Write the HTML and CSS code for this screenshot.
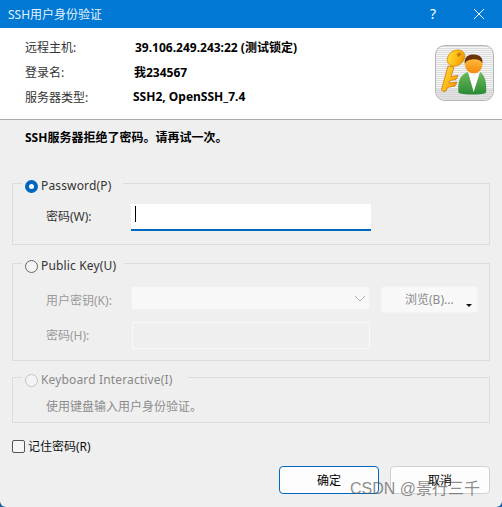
FILE: index.html
```html
<!DOCTYPE html>
<html lang="zh-CN">
<head>
    <meta charset="UTF-8">
    <title>SSH用户身份验证</title>
    <link rel="stylesheet" href="styles.css">
</head>
<body>
    <div class="window">
        <div class="titlebar">
            <span class="title">SSH用户身份验证</span>
            <span class="help">?</span>
            <svg class="close" width="12" height="12" viewBox="0 0 12 12"><path d="M1 1 L11 11 M11 1 L1 11" stroke="#fff" stroke-width="1" fill="none"/></svg>
        </div>

        <div class="header">
            <div class="info">
                <div class="info-row"><span class="info-label">远程主机:</span><b class="v1">39.106.249.243:22 (测试锁定)</b></div>
                <div class="info-row"><span class="info-label">登录名:</span><b class="v2">我234567</b></div>
                <div class="info-row"><span class="info-label">服务器类型:</span><b class="v3">SSH2, OpenSSH_7.4</b></div>
            </div>
            <svg class="logo" width="59" height="56" viewBox="0 0 59 56">
                <defs>
                    <pattern id="stripes" width="2" height="2" patternUnits="userSpaceOnUse">
                        <rect width="2" height="1" fill="#f6f6f6"/>
                        <rect y="1" width="2" height="1" fill="#dcdcdc"/>
                    </pattern>
                    <linearGradient id="gold" x1="0" y1="0" x2="1" y2="1">
                        <stop offset="0" stop-color="#ffe23a"/>
                        <stop offset="0.6" stop-color="#fdb40f"/>
                        <stop offset="1" stop-color="#e07f06"/>
                    </linearGradient>
                    <linearGradient id="skin" x1="0" y1="0" x2="0" y2="1">
                        <stop offset="0" stop-color="#ffc44a"/>
                        <stop offset="1" stop-color="#f58a0c"/>
                    </linearGradient>
                    <linearGradient id="shirt" x1="0" y1="0" x2="0" y2="1">
                        <stop offset="0" stop-color="#6cbb5c"/>
                        <stop offset="1" stop-color="#2c8a35"/>
                    </linearGradient>
                </defs>
                <rect x="0.5" y="0.5" width="58" height="55" rx="9" fill="url(#stripes)" stroke="#b4b4b4"/>
                <path d="M1 44 V46 a9 9 0 0 0 9 9 H49 a9 9 0 0 0 9 -9 V44 Z" fill="#d2d2d2" opacity="0.55"/>
                <path d="M13 21 L6.5 44.5 L8 46.5 L11 46 L12.5 42.5 L20 41 L22 37 L14 38 L15 35.5 L21 34.5 L23 30.5 L16 31.5 L19 22 Z" fill="url(#gold)" stroke="#c46f06" stroke-width="0.7"/>
                <ellipse cx="21" cy="13" rx="9.5" ry="7.5" transform="rotate(-35 21 13)" fill="url(#gold)" stroke="#d98a08" stroke-width="0.7"/>
                <ellipse cx="24" cy="9.5" rx="2.4" ry="1.7" transform="rotate(-35 24 9.5)" fill="#c97d08"/>
                <path d="M23.5 48 C22.5 38 24 30 33 27 L39 33 L45 27 C50 30 52 38 51 48 C44 50 31 50 23.5 48 Z" fill="url(#shirt)"/>
                <path d="M33 27 L38.7 47 L45 27 L39 30 Z" fill="#fff"/>
                <circle cx="38.7" cy="19.5" r="8.8" fill="url(#skin)"/>
                <path d="M29.7 19 C29 11 34 9.5 39 9.5 C45 9.5 48 13 47.5 18 C45 14.5 41 14 37 14.5 C33 15 31 16 29.7 19 Z" fill="#6e3209"/>
            </svg>
        </div>

        <div class="content">
            <p class="message">SSH服务器拒绝了密码。请再试一次。</p>

            <fieldset class="group group-password">
                <legend><span class="radio radio-on"></span>Password(P)</legend>
                <div class="field">
                    <label>密码(W):</label>
                    <div class="input input-active"><span class="caret"></span></div>
                </div>
            </fieldset>

            <fieldset class="group group-key">
                <legend><span class="radio"></span>Public Key(U)</legend>
                <div class="field off">
                    <label>用户密钥(K):</label>
                    <div class="combo">
                        <svg width="12" height="7" viewBox="0 0 12 7"><path d="M1 1 L6 6 L11 1" stroke="#b5b5b5" fill="none"/></svg>
                    </div>
                    <div class="browse">浏览(B)...<span class="browse-arrow"></span></div>
                </div>
                <div class="field off field-second">
                    <label>密码(H):</label>
                    <div class="input input-off"></div>
                </div>
            </fieldset>

            <fieldset class="group group-keyboard">
                <legend class="off"><span class="radio radio-off"></span>Keyboard Interactive(I)</legend>
                <p class="hint">使用键盘输入用户身份验证。</p>
            </fieldset>

            <label class="remember"><span class="checkbox"></span>记住密码(R)</label>

            <div class="actions">
                <button class="btn btn-default">确定</button>
                <button class="btn">取消</button>
            </div>
        </div>
        <div class="watermark">CSDN @景行三千</div>
    </div>
</body>
</html>
```

FILE: styles.css
```css
html, body {
    margin: 0;
    padding: 0;
    background: #0f5fae;
}
body {
    width: 502px;
    height: 507px;
    overflow: hidden;
    font-family: "Noto Sans", "Noto Sans CJK SC", sans-serif;
    font-size: 12px;
    color: #1a1a1a;
}
.window {
    position: relative;
    height: 507px;
    display: flex;
    flex-direction: column;
    background: #efefef;
    border-radius: 0 0 6px 6px;
    overflow: hidden;
}

/* title bar */
.titlebar {
    height: 27px;
    flex: none;
    display: flex;
    align-items: center;
    background: #0078d4;
    color: #fff;
    padding: 0 17px 1px 8px;
}
.title {
    flex: 1;
    color: #e6f2fb;
}
.help {
    font-size: 14px;
    margin-right: 37px;
}

/* top white part */
.header {
    height: 91px;
    flex: none;
    display: flex;
    background: #fff;
    border-bottom: 1px solid #aaa;
    padding-left: 25px;
    padding-right: 8px;
    box-sizing: content-box;
}
.info {
    flex: 1;
    padding-top: 6px;
}
.info-row {
    height: 25px;
    display: flex;
    align-items: center;
}
.info-label {
    width: 108px;
    color: #333;
}
.info-row b {
    color: #000;
    font-weight: 700;
}
.v1 { margin-left: 2px; }
.v2 { margin-left: 1px; }
.logo {
    margin-top: 17px;
}

/* lower gray part */
.content {
    flex: 1;
    padding: 0 12px;
}
.message {
    margin: 0;
    padding: 9px 0 0 13px;
    height: 24px;
    line-height: 18px;
    font-weight: 700;
    color: #000;
}
.group {
    width: 478px;
    box-sizing: border-box;
    margin: 0;
    padding: 0 0 0 33px;
    border: 1px solid #dcdcdc;
}
.group legend {
    margin-left: -24px;
    padding: 6px 12px 0 3px;
    height: 16px;
    line-height: 16px;
    display: flex;
    align-items: center;
    color: #333;
    box-sizing: content-box;
    letter-spacing: 0.15px;
}
.group-password {
    margin-top: 19px;
    height: 73px;
    padding-top: 10px;
}
.group-key {
    margin-top: 7px;
    height: 109px;
    padding-top: 12px;
}
.group-key legend {
    padding-right: 8px;
}
.group-keyboard {
    margin-top: 5px;
    height: 57px;
}
.group-keyboard legend {
    padding-right: 16px;
}
.radio {
    width: 13px;
    height: 13px;
    flex: none;
    box-sizing: border-box;
    border: 1px solid #666;
    border-radius: 50%;
    margin-right: 3px;
    background: #f4f4f4;
}
.radio-on {
    border: 4px solid #0067c0;
    background: #fff;
}
.radio-off {
    border-color: #c4c4c4;
}
.field {
    display: flex;
    align-items: flex-start;
}
.field label {
    width: 85px;
    height: 27px;
    line-height: 26px;
    flex: none;
    color: #333;
}
.field.off label {
    color: #9a9a9a;
    padding-top: 2px;
}
.field-second.off label {
    padding-top: 1px;
}
.group legend.off {
    color: #888;
}
.input {
    width: 240px;
    height: 27px;
    box-sizing: border-box;
    background: #fff;
}
.input-active {
    border-bottom: 2px solid #0067c0;
    padding: 2px 0 0 4px;
}
.caret {
    display: block;
    width: 1px;
    height: 16px;
    background: #000;
}
.input-off {
    width: 238px;
    margin-left: 1px;
    background: #efefef;
    border: 1px solid #f8f8f8;
}
.combo {
    width: 239px;
    height: 24px;
    display: flex;
    align-items: center;
    justify-content: flex-end;
    padding-right: 3px;
    box-sizing: border-box;
    background: #f8f8f8;
    border-radius: 2px;
    border: 1px solid #f2f2f2;
}
.browse {
    position: relative;
    width: 97px;
    height: 27px;
    line-height: 26px;
    margin-left: 11px;
    padding-left: 23px;
    box-sizing: border-box;
    background: #f8f8f8;
    border: 1px solid #f3f3f3;
    border-radius: 3px;
    color: #8c8c8c;
}
/* little arrow of the split button */
.browse-arrow {
    position: absolute;
    right: 5px;
    top: 17px;
    border: 3px solid transparent;
    border-top: 3px solid #111;
    border-bottom: 0;
}
.field-second {
    margin-top: 7px;
}
.hint {
    margin: 10px 0 0;
    padding-left: 0;
    height: 18px;
    line-height: 18px;
    color: #8c8c8c;
}
.remember {
    display: flex;
    align-items: center;
    margin-top: 14px;
    height: 18px;
    color: #111;
}
.checkbox {
    width: 13px;
    height: 13px;
    box-sizing: border-box;
    border: 1px solid #555;
    border-radius: 2px;
    margin-right: 3px;
    background: #f6f6f6;
}
.actions {
    display: flex;
    justify-content: flex-end;
    gap: 11px;
    margin-top: 11px;
    width: 478px;
}
.btn {
    width: 100px;
    height: 28px;
    padding: 0;
    background: #fdfdfd;
    border: 1px solid #d0d0d0;
    border-radius: 4px;
    font: inherit;
    color: #000;
}
.btn-default {
    border-color: #0067c0;
}
.watermark {
    position: absolute;
    left: 350px;
    top: 479px;
    font-size: 16px;
    line-height: 20px;
    color: rgba(90, 90, 90, 0.7);
    white-space: nowrap;
    font-family: "Liberation Sans", "Noto Sans CJK SC", sans-serif;
}
```
